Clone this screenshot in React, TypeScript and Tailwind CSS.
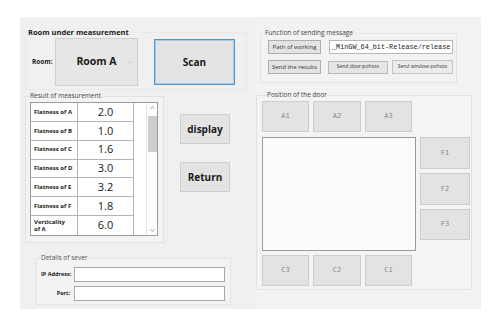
import { ChevronDown, ChevronUp } from "lucide-react"

const rows = [
  { label: "Flatness of A", value: "2.0" },
  { label: "Flatness of B", value: "1.0" },
  { label: "Flatness of C", value: "1.6" },
  { label: "Flatness of D", value: "3.0" },
  { label: "Flatness of E", value: "3.2" },
  { label: "Flatness of F", value: "1.8" },
  { label: "Verticality of A", value: "6.0" },
]

function DoorButton({ label, className = "" }: { label: string; className?: string }) {
  return (
    <button
      className={`flex items-center justify-center border border-[#cdcdcd] bg-[#e3e3e3] font-['DejaVu_Sans_Mono',monospace] text-[7px] text-[#8a8a8a] ${className}`}
    >
      {label}
    </button>
  )
}

export default function App() {
  return (
    <div className="h-[328px] w-[500px] bg-white pt-[17px] pl-[20px] font-['Open_Sans',sans-serif] text-[#1a1a1a]">
      <div className="flex h-[292px] w-[461px] bg-[#f0f0f0]">
        {/* Left column */}
        <div className="flex w-[236px] flex-col">
          {/* Room under measurement */}
          <fieldset className="mt-[9px] ml-[5px] h-[64px] w-[222px] border border-[#e9e9e9] pl-[2px]">
            <legend className="text-[7.5px] font-bold leading-[12px]">Room under measurement</legend>
            <div className="flex items-center">
              <span className="ml-[4px] w-[23px] text-[6.5px] font-bold">Room:</span>
              <div className="relative flex h-[48px] w-[83px] items-center justify-center border border-[#cfcfcf] bg-[#e6e6e6]">
                <span className="text-[10.5px] font-bold">Room A</span>
                <ChevronDown className="absolute right-[3px] h-[7px] w-[7px] text-[#9a9a9a]" strokeWidth={1.5} />
              </div>
              <button className="ml-[16px] h-[46px] w-[81px] border border-[#4f96cf] bg-[#e4e4e4] text-[10px] font-bold shadow-[inset_0_0_0_1px_#a9cbe6]">
                Scan
              </button>
            </div>
          </fieldset>

          {/* Result of measurement */}
          <div className="mt-[1px] flex">
            <fieldset className="ml-[5px] h-[152px] w-[139px] border border-[#e2e2e2] bg-[#f3f3f3] pl-[4px]">
              <legend className="text-[6.5px] leading-[10px] text-[#444]">Result of measurement</legend>
              <div className="mt-[1px] flex h-[134px] w-[128px] border border-[#9b9b9b] bg-white">
                <div className="flex w-[103px] flex-col">
                  {rows.map((r) => (
                    <div key={r.label} className="flex h-[19px] border-b border-[#b4b4b4] last:border-b-0">
                      <div className="flex w-[47px] items-center border-r border-[#b4b4b4] pr-[14px] pl-[3px] text-[6px] font-bold leading-[6.5px]">
                        <span className="whitespace-nowrap [&:has(br)]:whitespace-normal">
                          {r.label === "Verticality of A" ? (
                            <>
                              Verticality
                              <br />
                              of A
                            </>
                          ) : (
                            r.label
                          )}
                        </span>
                      </div>
                      <div className="flex w-[56px] items-center justify-center border-r border-[#b4b4b4] text-[11px]">
                        {r.value}
                      </div>
                    </div>
                  ))}
                </div>
                <div className="flex-1" />
                <div className="flex w-[11px] flex-col items-center border-l border-[#e6e6e6]">
                  <ChevronUp className="mt-[1px] h-[7px] w-[7px] text-[#555]" strokeWidth={2} />
                  <div className="mt-[5px] h-[36px] w-[9px] bg-[#cdcdcd]" />
                  <div className="flex-1" />
                  <ChevronDown className="mb-[1px] h-[7px] w-[7px] text-[#555]" strokeWidth={2} />
                </div>
              </div>
            </fieldset>
            <div className="ml-[16px] flex flex-col pt-[23px]">
              <button className="h-[30px] w-[50px] border border-[#cfcfcf] bg-[#e3e3e3] text-[10px] font-bold">
                display
              </button>
              <button className="mt-[18px] h-[30px] w-[50px] border border-[#cfcfcf] bg-[#e3e3e3] text-[10px] font-bold">
                Return
              </button>
            </div>
          </div>

          {/* Details of sever */}
          <fieldset className="mt-[10px] ml-[16px] h-[52px] w-[195px] border border-[#e4e4e4] bg-[#f3f3f3] pl-[4px]">
            <legend className="text-[6.5px] leading-[10px] text-[#555]">Details of sever</legend>
            <div className="mt-[4px] flex items-center">
              <span className="w-[29px] text-right text-[5.5px] font-bold whitespace-nowrap">IP Address:</span>
              <div className="ml-[4px] h-[15px] w-[151px] border border-[#a8a8a8] bg-white" />
            </div>
            <div className="mt-[4px] flex items-center">
              <span className="w-[29px] text-right text-[5.5px] font-bold whitespace-nowrap">Port:</span>
              <div className="ml-[4px] h-[15px] w-[151px] border border-[#a8a8a8] bg-white" />
            </div>
          </fieldset>
        </div>

        {/* Right column */}
        <div className="flex flex-1 flex-col bg-[#f2f2f2]">
          {/* Function of sending message */}
          <fieldset className="mt-[11px] ml-[4px] h-[55px] w-[197px] border border-[#e4e4e4] pl-[7px]">
            <legend className="ml-[-3px] text-[6.5px] leading-[10px] text-[#444]">Function of sending message</legend>
            <div className="mt-[2px] flex items-center">
              <button className="h-[14px] w-[53px] border border-[#adadad] bg-[#e3e3e3] text-[6px] text-[#333]">
                Path of working
              </button>
              <div className="ml-[8px] flex h-[14px] w-[124px] items-center overflow-hidden border border-[#b8b8b8] bg-white pl-[2px] font-['Liberation_Mono',monospace] text-[6.8px] whitespace-nowrap text-[#222]">
                _MinGW_64_bit-Release/release
              </div>
            </div>
            <div className="mt-[6px] flex items-center">
              <button className="h-[14px] w-[53px] border border-[#adadad] bg-[#e3e3e3] text-[6px] text-[#333]">
                Send the results
              </button>
              <button className="ml-[7px] h-[13px] w-[60px] border border-[#b8b8b8] bg-[#e6e6e6] text-[5px] text-[#333]">
                Send door-pohoto
              </button>
              <button className="ml-[4px] h-[14px] w-[61px] border border-[#c4c4c4] bg-[#ececec] text-[5px] text-[#333]">
                Send window-pohoto
              </button>
            </div>
          </fieldset>

          {/* Position of the door */}
          <fieldset className="mt-[7px] h-[200px] w-[216px] border border-[#e2e2e2] bg-[#f4f4f4] pl-[5px]">
            <legend className="ml-[5px] text-[6.5px] leading-[10px] text-[#444]">Position of the door</legend>
            <div className="mt-[1px] flex gap-[4px]">
              <DoorButton label="A1" className="h-[31px] w-[47px]" />
              <DoorButton label="A2" className="h-[31px] w-[48px]" />
              <DoorButton label="A3" className="h-[31px] w-[47px]" />
            </div>
            <div className="mt-[5px] flex gap-[4px]">
              <div className="h-[114px] w-[154px] border border-[#9a9a9a] bg-[#fbfbfb]" />
              <div className="flex flex-col gap-[4px]">
                <DoorButton label="F1" className="h-[32px] w-[50px]" />
                <DoorButton label="F2" className="h-[32px] w-[50px]" />
                <DoorButton label="F3" className="h-[31px] w-[50px]" />
              </div>
            </div>
            <div className="mt-[4px] flex gap-[4px]">
              <DoorButton label="C3" className="h-[31px] w-[47px]" />
              <DoorButton label="C2" className="h-[31px] w-[48px]" />
              <DoorButton label="C1" className="h-[31px] w-[47px]" />
            </div>
          </fieldset>
        </div>
      </div>
    </div>
  )
}
